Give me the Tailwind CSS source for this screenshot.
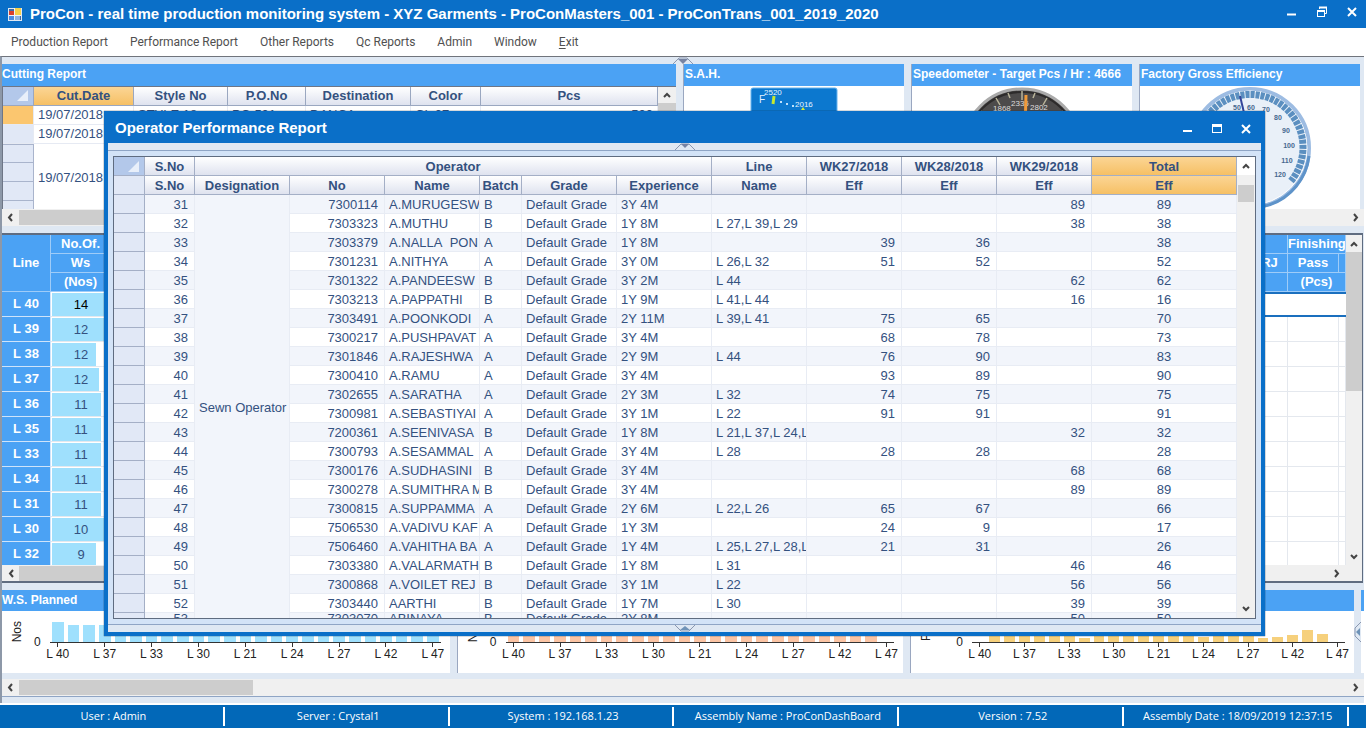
<!DOCTYPE html>
<html lang="en">
<head>
  <meta charset="UTF-8">
  <meta name="viewport" content="width=device-width, initial-scale=1.0">
  <title>ProCon</title>
  <script src="https://cdn.jsdelivr.net/npm/@tailwindcss/browser@4"></script>
</head>
<body class="bg-white font-['Liberation_Sans',Arial,sans-serif] text-[13px] text-[#34517f] min-h-screen overflow-x-hidden">
  <!-- title bar -->
  <header class="flex items-center h-7 bg-[#0a6fc8] text-white pl-2 pr-2">
    <svg class="w-[14px] h-[14px] mr-2" viewBox="0 0 14 14">
      <rect x="0.5" y="1.5" width="13" height="12" fill="#3c6aa8" stroke="#dfe8f2"/>
      <rect x="1" y="4" width="5" height="5" fill="#d8402c"/>
      <rect x="6" y="1" width="7" height="7" fill="#f7d04a"/>
      <rect x="1" y="9" width="5" height="4" fill="#4b8be0"/>
      <rect x="7" y="9" width="5" height="4" fill="#8fb4e2"/>
      <path d="M6.5 1v12M1 8.5h12" stroke="#eef3f8" stroke-width="1"/>
    </svg>
    <h1 class="font-bold text-[15px] whitespace-nowrap grow">ProCon - real time production monitoring system - XYZ Garments - ProConMasters_001 - ProConTrans_001_2019_2020</h1>
    <div class="flex gap-[18px] pb-1">
      <button aria-label="Minimize"><svg class="w-3 h-3" viewBox="0 0 12 12"><path d="M1 8.5h9" stroke="#fff" stroke-width="2"/></svg></button>
      <button aria-label="Restore"><svg class="w-3 h-3" viewBox="0 0 12 12" fill="none" stroke="#fff"><path d="M3.5 3V1.5h7v6H9"/><path d="M3 1.5h8" stroke-width="2"/><rect x="1.5" y="5" width="7" height="5.5"/><path d="M1 5h8" stroke-width="2"/></svg></button>
      <button aria-label="Close"><svg class="w-3 h-3" viewBox="0 0 12 12"><path d="M2 2l8 8M10 2l-8 8" stroke="#fff" stroke-width="2"/></svg></button>
    </div>
  </header>

  <nav class="flex items-center h-7 font-['Roboto',sans-serif] text-[12px] text-[#505050]">
    <a href="#" class="px-[11px]">Production Report</a>
    <a href="#" class="px-[11px]">Performance Report</a>
    <a href="#" class="px-[11px]">Other Reports</a>
    <a href="#" class="px-[11px]">Qc Reports</a>
    <a href="#" class="px-[11px]">Admin</a>
    <a href="#" class="px-[11px]">Window</a>
    <a href="#" class="px-[11px]"><span class="underline underline-offset-2">E</span>xit</a>
  </nav>

  <main class="bg-[#dfe8f3] border-t border-t-[#70747c] border-l-2 border-l-[#8d98a8] mr-[2px]">
    <!-- collapse handle -->
    <div class="h-[7px] flex justify-center"><svg class="w-[22px] h-[7px]" viewBox="0 0 22 7"><path d="M1 7l6-6h8l6 6" fill="none" stroke="#8a97b0"/><path d="M6 2h10l-5 5z" fill="#7683a3"/></svg></div>

    <!-- top panels -->
    <div class="grid grid-cols-[674fr_221fr_221fr_221fr] gap-[7px] mr-1 h-[145px]">
      <section class="bg-white overflow-hidden">
        <h2 class="h-[22px] leading-[20px] bg-[#4ba2f4] text-white font-bold text-[12px]">Cutting Report</h2>
        <div class="flex border-t border-l border-[#6e7686]">
          <table class="grow table-fixed border-separate border-spacing-0 w-px">
            <colgroup><col class="w-[31px]"><col class="w-[100px]"><col class="w-[94px]"><col class="w-[78px]"><col class="w-[105px]"><col class="w-[70px]"><col></colgroup>
            <thead class="leading-[18px] text-[13px]">
              <tr class="h-[19px] bg-linear-to-b from-white to-[#dde1ee] [&>th]:border-r [&>th]:border-b [&>th]:border-[#9aa7c0]">
                <th class="bg-[#b3c8ea] p-0"><svg class="w-3 h-3 ml-auto mr-1" viewBox="0 0 12 12"><path d="M11 0v11H0z" fill="#e8effa"/></svg></th>
                <th class="bg-linear-to-b from-[#fbd594] to-[#f6c064]">Cut.Date</th><th>Style No</th><th>P.O.No</th><th>Destination</th><th>Color</th><th>Pcs</th>
              </tr>
            </thead>
            <tbody class="leading-[18px] whitespace-nowrap">
              <tr class="h-[19px] [&>td]:border-b [&>td]:border-r [&>td]:border-[#e6eaf3] [&>td]:px-1">
                <td class="bg-[#fbc66f]"></td><td>19/07/2018</td><td>STYLE 18</td><td>PO 501</td><td>DANCA</td><td>CL 07</td><td class="text-right">500</td>
              </tr>
              <tr class="h-[19px] [&>td]:border-b [&>td]:border-r [&>td]:border-[#e6eaf3] [&>td]:px-1">
                <td class="bg-[#e1e8f6]"></td><td>19/07/2018</td><td></td><td></td><td></td><td></td><td></td>
              </tr>
              <tr class="h-[19px]"><td class="bg-[#e1e8f6] border-b border-t border-r border-[#a9b4cc]"></td><td rowspan="4" class="px-1 pb-2">19/07/2018</td><td></td><td></td><td></td><td></td><td></td></tr>
              <tr class="h-[19px]"><td class="bg-[#e1e8f6] border-b border-r border-[#a9b4cc]"></td></tr>
              <tr class="h-[19px]"><td class="bg-[#e1e8f6] border-b border-r border-[#a9b4cc]"></td></tr>
              <tr class="h-[19px]"><td class="bg-[#e1e8f6] border-r border-[#a9b4cc]"></td></tr>
            </tbody>
          </table>
          <div class="w-[18px] bg-[#f0f0f0]">
            <div class="h-4 flex items-center justify-center"><svg class="w-2 h-[6px]" viewBox="0 0 8 6"><path d="M1 5l3-3 3 3" fill="none" stroke="#444" stroke-width="2"/></svg></div>
            <div class="h-16 bg-[#cdcdcd]"></div>
          </div>
        </div>
      </section>
      <section class="bg-white overflow-hidden border-l border-[#9aa7c0]">
        <h2 class="h-[22px] leading-[20px] bg-[#4ba2f4] text-white font-bold text-[12px] pl-px">S.A.H.</h2>
        <svg class="w-[88px] h-[124px] mx-auto" viewBox="0 0 88 124" font-size="8" fill="#e4f2ff">
          <rect x="1" y="2" width="86" height="100" rx="2" fill="#0c78cf" stroke="#68b4ef"/>
          <text x="14" y="9">2520</text><text x="9" y="17" font-size="10">F</text>
          <path d="M23 18l1-8" stroke="#c8e830" stroke-width="3"/>
          <path d="M30 16h2M36 18h2M42 20h2" stroke="#bfe0fa" stroke-width="2"/>
          <text x="45" y="21">2016</text><path d="M51 24l2-3 2 3z" fill="#d8ea30"/>
        </svg>
      </section>
      <section class="bg-white overflow-hidden border-l border-[#9aa7c0]">
        <h2 class="h-[22px] leading-[20px] bg-[#4ba2f4] text-white font-bold text-[12px] whitespace-nowrap pl-px">Speedometer - Target Pcs / Hr : 4666</h2>
        <svg class="w-[124px] h-[124px] mx-auto" viewBox="0 0 124 124" font-size="8" fill="#ddd">
          <circle cx="62" cy="62" r="59" fill="#4d4b4b" stroke="#aaa" stroke-width="3"/>
          <circle cx="62" cy="62" r="56" fill="none" stroke="#2d2b2b" stroke-width="2"/>
          <path d="M36 12l4 7M62 5v9M87 12l-4 7M48 7l2 5M75 7l-2 5M21 25l4 4M103 25l-4 4" stroke="#b9b49a" stroke-width="1.5"/>
          <text x="33" y="25">1868</text><text x="51" y="20">2335</text><text x="70" y="24">2802</text>
          <path d="M66 9l-1 35" stroke="#f09a3a" stroke-width="3"/>
        </svg>
      </section>
      <section class="bg-white overflow-hidden border-l border-[#9aa7c0]">
        <h2 class="h-[22px] leading-[20px] bg-[#4ba2f4] text-white font-bold text-[12px] whitespace-nowrap pl-px">Factory Gross Efficiency</h2>
        <svg class="w-[126px] h-[124px] mx-auto" viewBox="0 0 124 124" font-size="7" font-weight="bold" fill="#46688f" text-anchor="middle">
          <circle cx="62" cy="62" r="59" fill="#e9f0f8" stroke="#9dbce2" stroke-width="4"/>
          <path d="M121 70A59 59 0 0 1 20 104" fill="none" stroke="#5e93c9" stroke-width="3"/>
          <circle cx="62" cy="62" r="57" fill="none" stroke="#fff"/>
          <path d="M21 95A53 53 0 1 1 103 95" fill="none" stroke="#5b8fc0" stroke-width="7" stroke-dasharray="4 1"/>
          <text x="49" y="24">50</text><text x="63" y="24">60</text><text x="78" y="26">70</text><text x="90" y="34">80</text><text x="98" y="47">90</text><text x="101" y="62">100</text><text x="99" y="77">110</text><text x="92" y="91">120</text>
          <path d="M52 10l6 25" stroke="#34459a" stroke-width="2"/>
        </svg>
      </section>
    </div>
    <div class="h-[17px] flex items-center justify-between bg-[#f0f0f0]">
      <svg class="w-[17px] h-[9px]" viewBox="0 0 17 9"><path d="M10 1L7 4.5l3 3.5" fill="none" stroke="#444" stroke-width="2"/></svg>
      <div class="grow h-[15px]"><div class="w-3/4 h-full bg-[#cdcdcd]"></div></div>
      <svg class="w-[17px] h-[9px]" viewBox="0 0 17 9"><path d="M7 1l3 3.5L7 8" fill="none" stroke="#444" stroke-width="2"/></svg>
    </div>

    <!-- line wise production -->
    <section class="mt-[7px] mr-px border-y-2 border-r border-[#5f6c80] bg-white">
      <div class="flex h-[330px] overflow-hidden">
        <table class="grow w-px table-fixed border-separate border-spacing-0 text-center">
          <colgroup><col class="w-[49px]"><col class="w-[60px]"><col><col class="w-[36px]"><col class="w-[51px]"><col class="w-[7px]"></colgroup>
          <thead class="bg-[#4ba2f4] text-white leading-[18px] [&_th]:border-r [&_th]:border-b [&_th]:border-[#9fccf8] [&_th]:p-0">
            <tr class="h-[19px]"><th rowspan="3">Line</th><th>No.Of.</th><th></th><th></th><th colspan="2" class="whitespace-nowrap overflow-hidden">Finishing</th></tr>
            <tr class="h-[19px]"><th>Ws</th><th></th><th>RJ</th><th>Pass</th><th></th></tr>
            <tr class="h-[19px]"><th>(Nos)</th><th></th><th></th><th colspan="2">(Pcs)</th></tr>
          </thead>
          <tbody id="line-rows"></tbody>
        </table>
        <div class="w-4 bg-[#f0f0f0] flex flex-col">
          <div class="h-[17px] flex items-center justify-center"><svg class="w-2 h-[6px]" viewBox="0 0 8 6"><path d="M1 5l3-3 3 3" fill="none" stroke="#444" stroke-width="2"/></svg></div>
          <div class="h-[139px] bg-[#cdcdcd]"></div>
          <div class="grow"></div>
          <div class="h-[17px] flex items-center justify-center"><svg class="w-2 h-[6px]" viewBox="0 0 8 6"><path d="M1 1l3 3 3-3" fill="none" stroke="#444" stroke-width="2"/></svg></div>
        </div>
      </div>
      <div class="h-4 flex items-center justify-between bg-[#f0f0f0] pr-[17px]">
        <svg class="w-[17px] h-[9px]" viewBox="0 0 17 9"><path d="M11 1L8 4.5l3 3.5" fill="none" stroke="#444" stroke-width="2"/></svg>
        <div class="grow h-[15px]"><div class="w-3/4 h-full bg-[#cdcdcd]"></div></div>
        <svg class="w-[17px] h-[9px]" viewBox="0 0 17 9"><path d="M7 1l3 3.5L7 8" fill="none" stroke="#444" stroke-width="2"/></svg>
      </div>
    </section>

    <!-- charts -->
    <div class="mt-[7px] flex h-[83px]">
      <div class="grid grid-cols-[448fr_447fr_444fr] gap-[7px] grow" id="charts"></div>
      <div class="w-[7px] flex items-center"><svg class="w-[7px] h-[22px]" viewBox="0 0 7 22"><path d="M7 1L1 7v8l6 6" fill="none" stroke="#8a97b0"/><path d="M6 7v8l-4-4z" fill="#6f93b8"/></svg></div>
      <div class="w-[3px] bg-white"><div class="h-[21px] bg-[#4ba2f4]"></div></div>
    </div>
    <div class="mt-[6px] h-[18px] flex items-center justify-between bg-[#f0f0f0] border-b border-[#8fa5c5]">
      <svg class="w-[17px] h-[9px]" viewBox="0 0 17 9"><path d="M10 1L7 4.5l3 3.5" fill="none" stroke="#444" stroke-width="2"/></svg>
      <div class="grow h-[15px]"><div class="w-[234px] h-full bg-[#cdcdcd]"></div></div>
      <svg class="w-[17px] h-[9px]" viewBox="0 0 17 9"><path d="M7 1l3 3.5L7 8" fill="none" stroke="#444" stroke-width="2"/></svg>
    </div>
    <div class="h-[6px]"></div>
  </main>

  <footer class="mt-[2px] h-[23px] bg-[#0268b8] text-white font-['Open_Sans',sans-serif] text-[11px] flex pr-[17px] [&>span]:flex-1 [&>span]:my-[2px] [&>span]:border-r-2 [&>span]:border-white [&>span]:flex [&>span]:items-center [&>span]:justify-center [&>span]:whitespace-nowrap [&>span]:pl-1">
    <span>User : Admin</span>
    <span>Server : Crystal1</span>
    <span>System : 192.168.1.23</span>
    <span>Assembly Name : ProConDashBoard</span>
    <span>Version : 7.52</span>
    <span>Assembly Date : 18/09/2019 12:37:15</span>
  </footer>

  <!-- report window -->
  <section class="absolute left-[104px] right-[101px] top-[111px] bg-[#d3e3f7] border-x-4 border-b-4 border-[#0a6fc8] shadow-[0_0_1px_#123]">
    <header class="h-8 bg-[#0a6fc8] text-white flex items-center pl-[7px] pr-[9px] pt-[3px]">
      <h2 class="font-bold text-[15px] grow">Operator Performance Report</h2>
      <div class="flex gap-[17px]">
        <button aria-label="Minimize"><svg class="w-3 h-3" viewBox="0 0 12 12"><path d="M1 8h9" stroke="#fff" stroke-width="2"/></svg></button>
        <button aria-label="Maximize"><svg class="w-3 h-3" viewBox="0 0 12 12"><rect x="1.5" y="1.5" width="9" height="8" fill="none" stroke="#fff"/><path d="M1 2.5h10" stroke="#fff" stroke-width="3"/></svg></button>
        <button aria-label="Close"><svg class="w-3 h-3" viewBox="0 0 12 12"><path d="M2 2l8 8M10 2l-8 8" stroke="#fff" stroke-width="2"/></svg></button>
      </div>
    </header>
    <div class="h-2 bg-[#dfe8f3] border-b border-[#8fa5c5] flex justify-center"><svg class="w-[22px] h-[7px]" viewBox="0 0 22 7"><path d="M1 7l6-6h8l6 6" fill="none" stroke="#8a97b0"/><path d="M7 1h8l-4 4z" fill="#7683a3"/></svg></div>
    <div class="mx-[5px] my-[5px] h-[463px] overflow-hidden border border-[#5f6c80] flex bg-white">
      <table class="grow w-px table-fixed border-separate border-spacing-0 leading-4">
        <colgroup><col class="w-[31px]"><col class="w-[50px]"><col class="w-[95px]"><col class="w-[95px]"><col class="w-[95px]"><col class="w-[42px]"><col class="w-[95px]"><col class="w-[95px]"><col class="w-[95px]"><col class="w-[95px]"><col class="w-[95px]"><col class="w-[95px]"><col></colgroup>
        <thead class="[&_th]:border-r [&_th]:border-b [&_th]:border-[#a4afc6] [&_th]:px-0 [&_th]:pb-0 [&_th]:pt-[2px]">
          <tr class="h-[19px] bg-linear-to-b from-white to-[#dde1ee]">
            <th class="bg-[#b3c8ea]"><svg class="w-3 h-3 ml-auto mr-1" viewBox="0 0 12 12"><path d="M11 0v11H0z" fill="#e8effa"/></svg></th>
            <th>S.No</th><th colspan="6">Operator</th><th>Line</th><th>WK27/2018</th><th>WK28/2018</th><th>WK29/2018</th>
            <th class="bg-linear-to-b from-[#fbd594] to-[#f6c064]">Total</th>
          </tr>
          <tr class="h-[19px] bg-linear-to-b from-white to-[#dde1ee]">
            <th class="bg-[#e1e8f6]"></th><th>S.No</th><th>Designation</th><th>No</th><th>Name</th><th>Batch</th><th>Grade</th><th>Experience</th><th>Name</th><th>Eff</th><th>Eff</th><th>Eff</th>
            <th class="bg-linear-to-b from-[#fbd594] to-[#f6c064]">Eff</th>
          </tr>
        </thead>
        <tbody id="operator-rows"></tbody>
      </table>
      <div class="w-[18px] bg-[#f0f0f0] flex flex-col">
        <div class="h-[18px] flex items-center justify-center bg-white"><svg class="w-2 h-[6px]" viewBox="0 0 8 6"><path d="M1 5l3-3 3 3" fill="none" stroke="#444" stroke-width="2"/></svg></div>
        <div class="h-[10px]"></div>
        <div class="h-[17px] mx-px bg-[#cdcdcd]"></div>
        <div class="grow"></div>
        <div class="h-[18px] flex items-center justify-center"><svg class="w-2 h-[6px]" viewBox="0 0 8 6"><path d="M1 1l3 3 3-3" fill="none" stroke="#444" stroke-width="2"/></svg></div>
      </div>
    </div>
    <div class="h-2 bg-[#dfe8f3] border-t border-[#8fa5c5] flex justify-center"><svg class="w-[22px] h-[7px]" viewBox="0 0 22 7"><path d="M1 0l6 6h8l6-6" fill="none" stroke="#8a97b0"/><path d="M6 5h10l-5-4z" fill="#6f93b8"/></svg></div>
  </section>

  <script>
    // no, name, batch, experience, lines, wk27, wk28, wk29, total
    const operators = [
      ['7300114', 'A.MURUGESW', 'B', '3Y 4M', '', '', '', 89, 89],
      ['7303323', 'A.MUTHU', 'B', '1Y 8M', 'L 27,L 39,L 29', '', '', 38, 38],
      ['7303379', 'A.NALLA&nbsp; PON', 'A', '1Y 8M', '', 39, 36, '', 38],
      ['7301231', 'A.NITHYA', 'A', '3Y 0M', 'L 26,L 32', 51, 52, '', 52],
      ['7301322', 'A.PANDEESW', 'B', '3Y 2M', 'L 44', '', '', 62, 62],
      ['7303213', 'A.PAPPATHI', 'B', '1Y 9M', 'L 41,L 44', '', '', 16, 16],
      ['7303491', 'A.POONKODI', 'A', '2Y 11M', 'L 39,L 41', 75, 65, '', 70],
      ['7300217', 'A.PUSHPAVAT', 'A', '3Y 4M', '', 68, 78, '', 73],
      ['7301846', 'A.RAJESHWA', 'A', '2Y 9M', 'L 44', 76, 90, '', 83],
      ['7300410', 'A.RAMU', 'A', '3Y 4M', '', 93, 89, '', 90],
      ['7302655', 'A.SARATHA', 'A', '2Y 3M', 'L 32', 74, 75, '', 75],
      ['7300981', 'A.SEBASTIYAI', 'A', '3Y 1M', 'L 22', 91, 91, '', 91],
      ['7200361', 'A.SEENIVASA', 'B', '1Y 8M', 'L 21,L 37,L 24,L', '', '', 32, 32],
      ['7300793', 'A.SESAMMAL', 'A', '3Y 4M', 'L 28', 28, 28, '', 28],
      ['7300176', 'A.SUDHASINI', 'B', '3Y 4M', '', '', '', 68, 68],
      ['7300278', 'A.SUMITHRA M', 'B', '3Y 4M', '', '', '', 89, 89],
      ['7300815', 'A.SUPPAMMA', 'A', '2Y 6M', 'L 22,L 26', 65, 67, '', 66],
      ['7506530', 'A.VADIVU KAF', 'A', '1Y 3M', '', 24, 9, '', 17],
      ['7506460', 'A.VAHITHA BA', 'A', '1Y 4M', 'L 25,L 27,L 28,L', 21, 31, '', 26],
      ['7303380', 'A.VALARMATH', 'B', '1Y 8M', 'L 31', '', '', 46, 46],
      ['7300868', 'A.VOILET REJ', 'B', '3Y 1M', 'L 22', '', '', 56, 56],
      ['7303440', 'AARTHI', 'B', '1Y 7M', 'L 30', '', '', 39, 39],
      ['7303070', 'ABINAYA', 'B', '2Y 8M', '', '', '', 50, 50],
    ];

    document.getElementById('operator-rows').innerHTML = operators.map((o, i) => {
      const last = i === operators.length - 1;
      const cell = `border-r border-b border-[#e8ecf4] px-1 pb-0 overflow-hidden whitespace-nowrap ${last ? 'pt-0 align-top leading-3' : 'pt-[2px]'}`;
      const num = cell + ' text-right pr-[6px]';
      return `<tr class="h-[19px] ${i % 2 ? 'bg-white' : 'bg-[#f2f5fb]'}">
        <td class="bg-[#e1e8f6] border-r border-b border-[#a4afc6] p-0"></td>
        <td class="${num}">${31 + i}</td>
        ${i ? '' : `<td rowspan="${operators.length}" class="bg-[#f2f5fb] border-r border-[#e8ecf4] pl-1 pb-3 pr-0 whitespace-nowrap overflow-hidden">Sewn Operator</td>`}
        <td class="${num}">${o[0]}</td><td class="${cell} pr-0">${o[1]}</td><td class="${cell}">${o[2]}</td>
        <td class="${cell}">Default Grade</td><td class="${cell}">${o[3]}</td><td class="${cell} pr-0">${o[4]}</td>
        <td class="${num}">${o[5]}</td><td class="${num}">${o[6]}</td><td class="${num}">${o[7]}</td>
        <td class="${cell} text-center">${o[8]}</td></tr>`;
    }).join('');

    // line, machines, bar width in %
    const lines = [['L 40', 14, 100], ['L 39', 12, 100], ['L 38', 12, 74], ['L 37', 12, 79], ['L 36', 11, 82], ['L 35', 11, 82],
      ['L 33', 11, 82], ['L 34', 11, 82], ['L 31', 11, 82], ['L 30', 10, 100], ['L 32', 9, 74]];

    document.getElementById('line-rows').innerHTML = lines.map(([name, ws, pct], i) => {
      const cell = i ? 'border-r border-b border-[#e4e8ee] p-0' : 'border-y-2 border-[#1a6fbe] p-0';
      return `<tr class="h-[25px]">
        <th class="bg-[#4ba2f4] text-white border-b border-r border-[#cfe4fa] p-0">${name}</th>
        <td class="border-b border-[#e4e8ee] p-0"><div class="relative h-[23px] leading-[23px] ${i ? '' : 'text-black'}">
          <div class="absolute inset-y-0 left-px bg-[#9fe0fd]" style="width:${pct}%"></div><span class="relative">${ws}</span></div></td>
        <td class="${cell}"></td><td class="${cell}"></td><td class="${cell}"></td><td class="${cell}"></td></tr>`;
    }).join('');

    const ticks = ['L 40', 'L 37', 'L 33', 'L 30', 'L 21', 'L 24', 'L 27', 'L 42', 'L 47'];
    const charts = [
      { title: 'W.S. Planned', axis: 'Nos', color: 'bg-[#9fe0fd]', pad: 'pl-12 pr-[9px]', edge: '',
        bars: [20, 17, 17, 17, 16, 16, 16, 16, 16, 15, 15, 15, 15, 14, 14, 14, 13, 13, 13, 12, 12, 11, 11, 10, 9] },
      { title: '', axis: 'Nos', color: 'bg-[#fbc4a4]', pad: 'pl-12 pr-[9px]', edge: 'border-l border-[#9aa7c0]',
        bars: [18, 16, 16, 16, 15, 15, 15, 15, 14, 14, 14, 14, 13, 13, 13, 12, 12, 12, 11, 11, 10, 10, 9, 8, 0] },
      { title: '', axis: 'Pcs', color: 'bg-[#f6d07c]', pad: 'pl-[61px] pr-[9px]', edge: 'border-l border-[#9aa7c0]',
        bars: [0, 12, 12, 6, 10, 12, 9, 4, 8, 10, 12, 9, 11, 10, 9, 5, 8, 9, 6, 4, 5, 7, 12, 8, 0] },
    ];

    document.getElementById('charts').innerHTML = charts.map(c => `
      <section class="bg-white ${c.edge}">
        <h2 class="h-[21px] leading-[20px] bg-[#4ba2f4] text-white font-bold text-[12px]">${c.title}</h2>
        <div class="relative text-[12px] leading-[14px] text-[#222] ${c.pad}">
          <span class="absolute left-2 top-[10px] [writing-mode:vertical-rl] rotate-180">${c.axis}</span>
          <div class="absolute top-6 ${c.pad} left-0 -translate-x-4">0</div>
          <div class="grid grid-cols-25 h-8 items-end border-b border-[#333]">
            ${c.bars.map(h => `<div class="mx-[2px] ${c.color}" style="height:${h}px"></div>`).join('')}
          </div>
          <div class="grid grid-cols-25">
            ${c.bars.map((h, i) => `<div class="flex flex-col items-center whitespace-nowrap w-full">${i % 3 ? '' : `<i class="block w-px h-1 bg-[#333]"></i><span class="-mx-3">${ticks[i / 3]}</span>`}</div>`).join('')}
          </div>
        </div>
      </section>`).join('');
  </script>
</body>
</html>
